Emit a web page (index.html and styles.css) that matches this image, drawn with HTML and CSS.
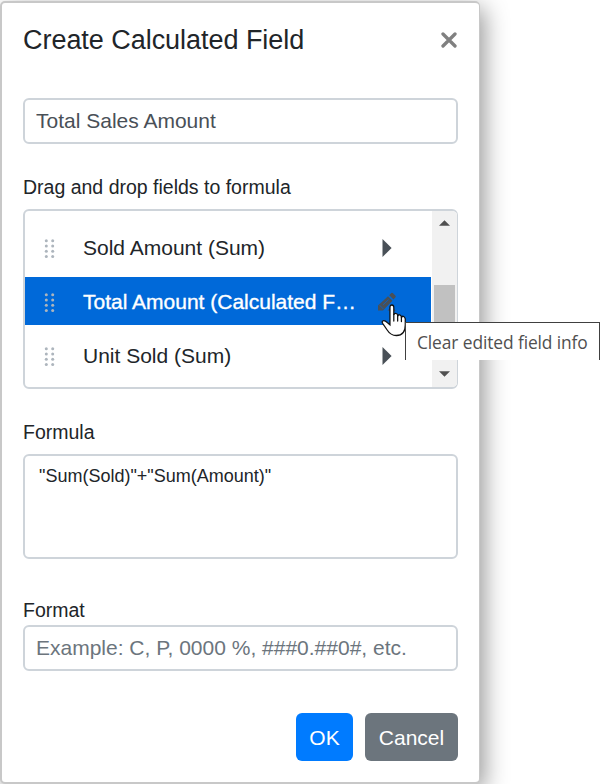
FILE: index.html
```html
<!DOCTYPE html>
<html lang="en">
<head>
<meta charset="utf-8">
<title>Create Calculated Field</title>
<link rel="stylesheet" href="styles.css">
</head>
<body>
<svg class="defs" aria-hidden="true">
  <symbol id="grip" viewBox="0 0 12 20">
    <g fill="currentColor"><circle cx="2.3" cy="1.8" r="1.5"/><circle cx="8.7" cy="1.8" r="1.5"/><circle cx="2.3" cy="7" r="1.5"/><circle cx="8.7" cy="7" r="1.5"/><circle cx="2.3" cy="12.2" r="1.5"/><circle cx="8.7" cy="12.2" r="1.5"/><circle cx="2.3" cy="17.4" r="1.5"/><circle cx="8.7" cy="17.4" r="1.5"/></g>
  </symbol>
</svg>
<main class="dialog">
  <header class="header">
    <h1 class="title">Create Calculated Field</h1>
    <button class="close" aria-label="Close"><svg width="16" height="16" viewBox="0 0 16 16"><path d="M2 2 14 14M14 2 2 14" stroke="currentColor" stroke-width="3.3" stroke-linecap="round"/></svg></button>
  </header>
  <input class="control name" type="text" value="Total Sales Amount">
  <div class="label fields-label">Drag and drop fields to formula</div>
  <div class="fields">
    <ul class="list">
      <li class="item"><svg class="grip"><use href="#grip"/></svg><span class="text">Sold Amount (Sum)</span><svg class="arrow" viewBox="0 0 10 18"><path d="M.5 0 9.6 9 .5 18z"/></svg></li>
      <li class="item selected"><svg class="grip"><use href="#grip"/></svg><span class="text">Total Amount (Calculated F…</span><svg class="pencil" viewBox="0 0 20 20"><path d="M1 18.5V13.5L11 4.2 15.4 8.7 6 18.5zM12.2 3.2 14.3 1.1Q15 .4 15.8 1.1L18.5 3.8Q19.2 4.6 18.5 5.3L16.5 7.5zM10.5 18.5 14 15 19 18.5z"/><path class="score" d="M2.6 13.2 6.4 17M6 12.8 11.6 7.6"/></svg></li>
      <li class="item"><svg class="grip"><use href="#grip"/></svg><span class="text">Unit Sold (Sum)</span><svg class="arrow" viewBox="0 0 10 18"><path d="M.5 0 9.6 9 .5 18z"/></svg></li>
    </ul>
    <div class="scrollbar">
      <svg width="11" height="6" viewBox="0 0 12 6"><path d="M0 6 6 0 12 6z"/></svg>
      <div class="thumb"></div>
      <svg width="11" height="6" viewBox="0 0 12 6"><path d="M0 0 6 6 12 0z"/></svg>
    </div>
  </div>
  <div class="label formula-label">Formula</div>
  <div class="formula">"Sum(Sold)"+"Sum(Amount)"</div>
  <div class="label format-label">Format</div>
  <input class="control format" type="text" placeholder="Example: C, P, 0000 %, ###0.##0#, etc.">
  <footer class="footer">
    <button class="btn ok">OK</button>
    <button class="btn cancel">Cancel</button>
  </footer>
</main>
<svg class="cursor" viewBox="0 0 27 33" preserveAspectRatio="none"><path d="M9.3 17V3.5Q9.3 1 11.3 1T13.3 3.5V11Q13.6 9.3 15.3 9.3T17.3 11.3V12.2Q17.8 10.6 19.3 10.8T21.2 12.8V13.7Q21.8 12 23.2 12.3T25.2 14.7V21Q25.2 31.5 16 31.5 10 31.5 6.4 26L1.7 19.3Q.5 17.2 2.2 16.8 4 16.3 6.5 18.6L9.3 20.8z"/><path d="M13.3 10.5V17M17.3 11.5V17M21.2 13V17.5"/></svg>
<div class="tooltip" role="tooltip">Clear edited field info</div>
</body>
</html>
```
FILE: styles.css
```css
* { box-sizing: border-box; }
html, body { height: 100%; overflow: hidden; }
body { margin: 0; background: #fff; color: #212529; font-family: "Liberation Sans", Arial, sans-serif; }
button, input { font-family: inherit; }
.defs { position: absolute; width: 0; height: 0; }
.dialog {
  width: 480px; height: 783px; margin-top: 1px; padding: 20px 21px 0 21px;
  display: flex; flex-direction: column;
  border: 2px solid #c8c8c8; border-right-width: 1px; border-radius: 5px; background: #fff;
  box-shadow: 4px 7px 24px rgba(0, 0, 0, .42);
}
.header { display: flex; justify-content: space-between; height: 34px; }
.title { margin: 0; font-size: 27px; font-weight: 400; line-height: 34px; letter-spacing: -.04px; }
.close { width: 16px; height: 16px; margin: 8.5px 1.5px 0 0; padding: 0; border: 0; background: none; color: #808080; }
.close svg { display: block; }
.control {
  width: 435px; height: 46px; flex: none; padding: 0 11px; border: 2px solid #ced4da; border-radius: 6px;
  background: #fff; color: #495057; font-size: 21px;
}
.control::placeholder { color: #6c757d; opacity: 1; }
.name { margin-top: 41px; }
.label { font-size: 19.5px; line-height: 24px; }
.fields-label { margin-top: 31px; }
.fields { width: 435px; height: 180px; margin-top: 10px; display: flex; border: 2px solid #ced4da; border-right-width: 1px; border-radius: 6px; overflow: hidden; }
.list { width: 406px; flex: none; margin: 0; padding: 12px 0 0; display: flex; flex-direction: column; gap: 6px; list-style: none; }
.item { height: 48px; display: flex; align-items: center; padding: 0 32px 0 19px; font-size: 21px; }
.grip { width: 12px; height: 20px; margin: 3px 27px 0 0; flex: none; color: #adb5bd; }
.text { flex: 1; line-height: 26px; margin-top: 2px; white-space: nowrap; }
.arrow { width: 10px; height: 18px; margin: 2px 7px 0 0; fill: #495057; }
.selected { background: #0069d9; color: #fff; }
.selected .text { -webkit-text-stroke: .35px #fff; }
.pencil { width: 20px; height: 20px; margin: 2px 2px 0 0; fill: #495057; }
.score { stroke: #0069d9; stroke-width: .7; fill: none; }
.scrollbar { width: 25px; flex: none; margin: 0 0 0 1px; padding: 9px 1px 10px 0; display: flex; flex-direction: column; align-items: center; background: #f1f1f1; fill: #505050; }
.thumb { width: 21px; height: 50px; margin: 59px 0 auto; background: #c1c1c1; }
.formula-label { margin-top: 31px; }
.formula { width: 435px; height: 105px; flex: none; margin-top: 10px; padding: 9px 14px; border: 2px solid #ced4da; border-radius: 6px; font-size: 18px; line-height: 22px; }
.format-label { margin-top: 39px; }
.format { margin-top: 3px; }
.footer { display: flex; justify-content: flex-end; gap: 12px; margin-top: 42px; }
.btn { height: 48px; padding: 2px 0 0; border: 0; border-radius: 6px; color: #fff; font-size: 21px; }
.ok { width: 57px; background: #007bff; }
.cancel { width: 93px; background: #6c757d; }
.tooltip {
  position: absolute; left: 405px; top: 322px; width: 195px; height: 38px; padding-left: 11px;
  border: 1px solid #404040; border-bottom: 0; background: #fff; color: #505050;
  font: 400 17.4px/38px "Open Sans", "Noto Sans", sans-serif; letter-spacing: -.11px; white-space: nowrap;
}
.cursor { position: absolute; left: 380.5px; top: 303.5px; width: 26px; height: 33px; fill: #fff; stroke: #111; stroke-width: 1.3; stroke-linecap: round; }
```
